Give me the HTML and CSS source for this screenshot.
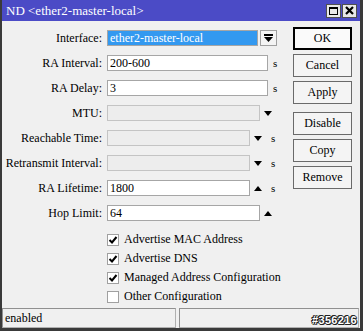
FILE: index.html
```html
<!DOCTYPE html>
<html>
<head>
<meta charset="utf-8">
<link rel="stylesheet" href="styles.css">
</head>
<body>
<div class="window">
  <div class="titlebar">
    <span class="title">ND &lt;ether2-master-local&gt;</span>
    <div class="tbtns">
      <span class="tb tb-max"><span class="maxbox"></span></span>
      <span class="tb tb-close">
        <svg width="9" height="9" viewBox="0 0 9 9"><path d="M1 1 L8 8 M8 1 L1 8" stroke="#000" stroke-width="2.2"/></svg>
      </span>
    </div>
  </div>
  <div class="body">
    <div class="form">
      <div class="row">
        <label class="lbl">Interface:</label>
        <div class="ctl">
          <div class="inp w-if sel">ether2-master-local</div>
          <span class="ddbtn">
            <svg width="9" height="9" viewBox="0 0 9 9"><rect x="0" y="0" width="9" height="2" fill="#000"/><path d="M0 3 H9 L4.5 8 Z" fill="#000"/></svg>
          </span>
        </div>
      </div>
      <div class="row">
        <label class="lbl">RA Interval:</label>
        <div class="ctl"><div class="inp w-full">200-600</div><span class="unit">s</span></div>
      </div>
      <div class="row">
        <label class="lbl">RA Delay:</label>
        <div class="ctl"><div class="inp w-full">3</div><span class="unit">s</span></div>
      </div>
      <div class="row">
        <label class="lbl">MTU:</label>
        <div class="ctl"><div class="inp w-dd dis"></div><span class="tri down"></span></div>
      </div>
      <div class="row">
        <label class="lbl">Reachable Time:</label>
        <div class="ctl"><div class="inp w-ddu dis"></div><span class="tri down"></span><span class="unit u2">s</span></div>
      </div>
      <div class="row">
        <label class="lbl">Retransmit Interval:</label>
        <div class="ctl"><div class="inp w-ddu dis"></div><span class="tri down"></span><span class="unit u2">s</span></div>
      </div>
      <div class="row">
        <label class="lbl">RA Lifetime:</label>
        <div class="ctl"><div class="inp w-ddu">1800</div><span class="tri up"></span><span class="unit u2">s</span></div>
      </div>
      <div class="row">
        <label class="lbl">Hop Limit:</label>
        <div class="ctl"><div class="inp w-dd">64</div><span class="tri up"></span></div>
      </div>
      <div class="checks">
        <div class="chk"><span class="box on"><svg width="10" height="10" viewBox="0 0 10 10"><path d="M1.5 5 L4 7.5 L8.5 2" fill="none" stroke="#000" stroke-width="2"/></svg></span><span class="ctext">Advertise MAC Address</span></div>
        <div class="chk"><span class="box on"><svg width="10" height="10" viewBox="0 0 10 10"><path d="M1.5 5 L4 7.5 L8.5 2" fill="none" stroke="#000" stroke-width="2"/></svg></span><span class="ctext">Advertise DNS</span></div>
        <div class="chk"><span class="box on"><svg width="10" height="10" viewBox="0 0 10 10"><path d="M1.5 5 L4 7.5 L8.5 2" fill="none" stroke="#000" stroke-width="2"/></svg></span><span class="ctext">Managed Address Configuration</span></div>
        <div class="chk"><span class="box"></span><span class="ctext">Other Configuration</span></div>
      </div>
    </div>
    <div class="buttons">
      <div class="btn default">OK</div>
      <div class="btn">Cancel</div>
      <div class="btn">Apply</div>
      <div class="btn sep">Disable</div>
      <div class="btn">Copy</div>
      <div class="btn">Remove</div>
    </div>
  </div>
  <div class="statusbar">
    <div class="sb sb-left">enabled</div>
    <div class="sb sb-right"><span class="ident">#356216</span></div>
  </div>
</div>
</body>
</html>
```
FILE: styles.css
```css
html, body {
  margin: 0;
  padding: 0;
  background: #f0f0f0;
}
.window {
  width: 363px;
  height: 331px;
  box-sizing: border-box;
  border-left: 2px solid #3a3a3a;
  border-right: 3px solid #3a3a3a;
  border-bottom: 3px solid #3a3a3a;
  background: #f0f0f0;
  display: flex;
  flex-direction: column;
  font-family: "Liberation Serif", "DejaVu Serif", serif;
  font-size: 12px;
  color: #000;
}
.titlebar {
  height: 21px;
  background: #4b4bc6;
  display: flex;
  align-items: center;
  justify-content: space-between;
  padding: 0 3px 0 4px;
}
.title {
  color: #fff;
  font-size: 13px;
}
.tbtns {
  display: flex;
  gap: 1px;
}
.tb {
  width: 15px;
  height: 14px;
  box-sizing: border-box;
  background: #e8e8e8;
  border: 1px solid #505050;
  display: flex;
  align-items: center;
  justify-content: center;
}
.maxbox {
  width: 9px;
  height: 8px;
  box-sizing: border-box;
  border: 1px solid #000;
  border-top-width: 2px;
}
.body {
  flex: 1;
  display: flex;
  justify-content: space-between;
}
.form {
  padding-top: 9px;
  display: flex;
  flex-direction: column;
}
.row {
  display: flex;
  align-items: center;
  height: 16px;
  margin-bottom: 9px;
}
.lbl {
  width: 100px;
  text-align: right;
  padding-right: 5px;
}
.ctl {
  display: flex;
  align-items: center;
}
.inp {
  height: 16px;
  box-sizing: border-box;
  border: 1px solid #a6a6a6;
  background: #fff;
  padding: 0 2px;
  line-height: 14px;
  font-size: 12px;
  white-space: nowrap;
  overflow: hidden;
}
.inp.dis {
  background: #ededed;
  border-color: #c4c4c4;
}
.inp.sel {
  background: #3399f0;
  color: #fff;
}
.w-if { width: 151px; }
.w-full { width: 161px; }
.w-dd { width: 153px; }
.w-ddu { width: 143px; }
.ddbtn {
  width: 17px;
  height: 16px;
  box-sizing: border-box;
  margin-left: 2px;
  border: 1px solid #a0a0a0;
  background: #f4f4f4;
  display: flex;
  align-items: center;
  justify-content: center;
}
.unit {
  margin-left: 5px;
  font-size: 11px;
}
.unit.u2 {
  margin-left: 5px;
}
.tri {
  width: 16px;
  height: 16px;
  position: relative;
}
.tri::after {
  content: "";
  position: absolute;
  left: 4px;
  top: 6px;
  border-left: 4px solid transparent;
  border-right: 4px solid transparent;
}
.tri.down::after {
  border-top: 5px solid #000;
}
.tri.up::after {
  border-bottom: 5px solid #000;
}
.checks {
  margin-top: 0;
  padding-left: 105px;
  display: flex;
  flex-direction: column;
}
.chk {
  height: 19px;
  display: flex;
  align-items: center;
}
.box {
  width: 12px;
  height: 12px;
  box-sizing: border-box;
  border: 1px solid #a0a0a0;
  background: #fff;
  display: flex;
  align-items: center;
  justify-content: center;
  margin-right: 5px;
}
.ctext {
  font-size: 12px;
}
.buttons {
  padding-top: 6px;
  padding-right: 8px;
  display: flex;
  flex-direction: column;
  gap: 4px;
}
.btn {
  width: 59px;
  height: 23px;
  box-sizing: border-box;
  border: 1px solid #6a6a6a;
  background: #f4f4f4;
  display: flex;
  align-items: center;
  justify-content: center;
  font-size: 12px;
}
.btn.default {
  border: 1px solid #000;
  box-shadow: inset 0 0 0 1px #000;
  background: #fafafa;
}
.btn.sep {
  margin-top: 4px;
}
.statusbar {
  height: 20px;
  display: flex;
  gap: 3px;
  padding: 0 1px 0 0;
}
.sb {
  height: 20px;
  box-sizing: border-box;
  border: 1px solid #b0b0b0;
  border-top-color: #909090;
  border-left-color: #909090;
  display: flex;
  align-items: center;
}
.sb-left {
  width: 174px;
  padding-left: 2px;
}
.sb-right {
  flex: 1;
  justify-content: flex-end;
  align-items: flex-end;
  padding: 0 1px 1px 0;
}
.ident {
  font-family: "Liberation Sans", Arial, sans-serif;
  font-weight: bold;
  font-size: 11px;
  color: #fff;
  letter-spacing: 0.3px;
  text-shadow: 1px 0 0 #222, -1px 0 0 #222, 0 1px 0 #222, 0 -1px 0 #222, 1px 1px 0 #222, -1px -1px 0 #222;
}
```
